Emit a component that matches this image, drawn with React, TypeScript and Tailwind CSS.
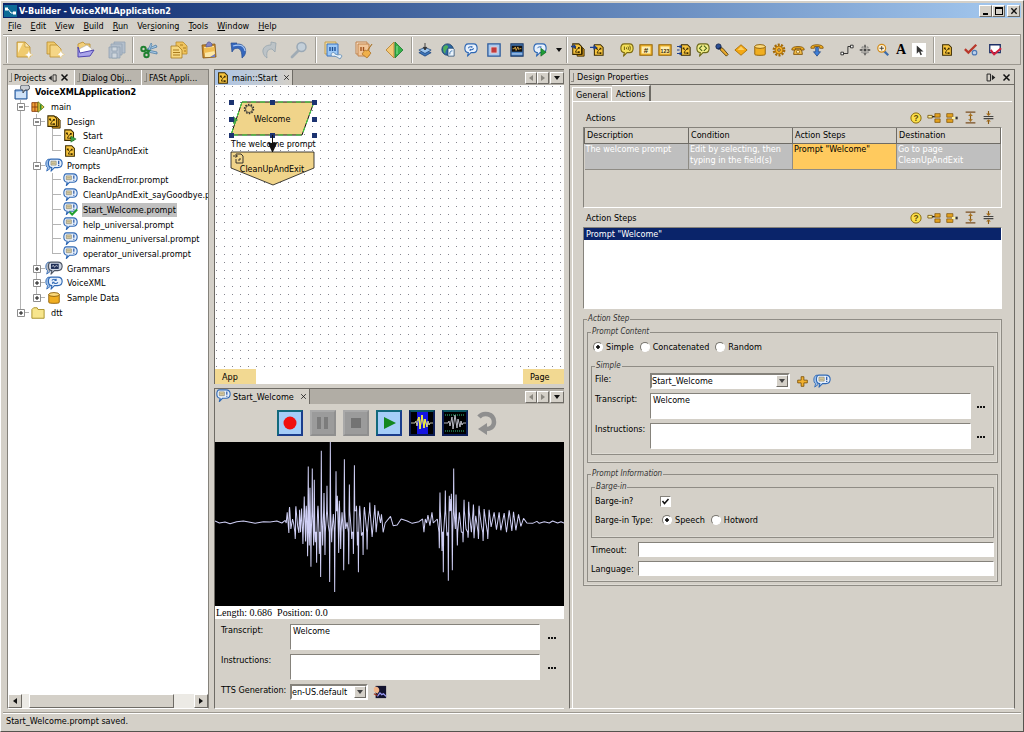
import { ReactNode } from "react";
import clsx from "clsx";

const RAISED =
    "border border-t-white border-l-white border-b-[#6e6b65] border-r-[#6e6b65] bg-[#d4d0c8]";
const SUNKEN =
    "border border-t-[#85827b] border-l-[#85827b] border-b-white border-r-white";

/* ---------- icons ---------- */

function Svg(props: { size?: number; box?: number; children: ReactNode }) {
    const size = props.size ?? 14;
    const box = props.box ?? 16;
    return (
        <svg
            width={size}
            height={size}
            viewBox={`0 0 ${box} ${box}`}
            className="flex-none"
            aria-hidden="true"
        >
            {props.children}
        </svg>
    );
}

function Sheet(props: { x: number; y: number; fill?: string; edge?: string }) {
    return (
        <path
            d={`M${props.x} ${props.y}h7l4 4v8h-11z`}
            fill={props.fill ?? "#f0cb6e"}
            stroke={props.edge ?? "#b98d2e"}
            strokeWidth="0.8"
        />
    );
}

const NewIcon = (
    <Svg size={20} box={20}>
        <path d="M3 2h8l5 5v10H3z" fill="#f0cb6e" stroke="#b98d2e" strokeWidth="0.8" />
        <path d="M4 3h5l-5 10z" fill="#fff0c4" />
        <path d="M11 2v5h5z" fill="#fbe7b0" stroke="#b98d2e" strokeWidth="0.6" />
        <path
            d="M15 10l1 3.500 3 1.500-3 1-1 3.500-1.500-3.500-3-1 3-1.500z"
            fill="#fff"
            stroke="#e8c468"
            strokeWidth="0.5"
        />
    </Svg>
);

const NewManyIcon = (
    <Svg size={20} box={20}>
        <Sheet x={2} y={2} />
        <Sheet x={5} y={5} fill="#f5d686" />
        <path
            d="M16 10l1 3 2.500 1.500-2.500 1-1 3-1.500-3-2.500-1 2.500-1.500z"
            fill="#fff"
            stroke="#e8c468"
            strokeWidth="0.5"
        />
    </Svg>
);

const OpenIcon = (
    <Svg size={20} box={20}>
        <path d="M2 4l5-2 2 2h5v5H2z" fill="#f2cf7a" stroke="#b98d2e" strokeWidth="0.8" />
        <path d="M3 9l8-4 5 4-2 5H3z" fill="#fff" stroke="#999" strokeWidth="0.5" />
        <path
            d="M2 17V7l2 6 14-3-4 6z"
            fill="#aaa5ea"
            stroke="#4f45b0"
            strokeWidth="1"
            strokeLinejoin="round"
        />
    </Svg>
);

const SaveAllIcon = (
    <Svg size={20} box={20}>
        <g fill="#b4bfcc" stroke="#93a2b3" strokeWidth="0.8">
            <path d="M7 2h11v11H7z" />
            <path d="M4 4h11v11H4z" />
            <path d="M2 7h11v11H2z" />
            <path d="M5 7h5v4H5zM5 13h5v5H5z" fill="#cfd6dd" />
        </g>
    </Svg>
);

const CutIcon = (
    <Svg size={20} box={20}>
        <path d="M9 10l9-3-1-2-9 4zM9 12l9 2v-2l-9-2z" fill="#a9cbe6" stroke="#41739f" strokeWidth="0.7" />
        <path d="M9 10l3-7 1 1-2 6z" fill="#a9cbe6" stroke="#41739f" strokeWidth="0.6" />
        <circle cx="4.500" cy="9" r="2.200" fill="none" stroke="#1f8030" strokeWidth="2" />
        <circle cx="7.500" cy="15" r="2.200" fill="none" stroke="#1f8030" strokeWidth="2" />
        <path d="M6 10l4 1-2 2" fill="none" stroke="#1f8030" strokeWidth="2" />
    </Svg>
);

const CopyIcon = (
    <Svg size={20} box={20}>
        <Sheet x={7} y={2} fill="#f0c45e" />
        <Sheet x={2} y={6} fill="#f7d880" edge="#a87b1e" />
        <path d="M4 10h6M4 12.500h7M4 15h7M11 5h3M14 8h3M15 11h2" stroke="#a87b1e" />
    </Svg>
);

const PasteIcon = (
    <Svg size={20} box={20}>
        <path d="M3 5l13-1 1 13-13 1z" fill="#c98b2c" stroke="#845513" strokeWidth="0.8" />
        <path d="M5 7l10-1 1 8-4 3H6z" fill="#fbe7a8" />
        <path d="M5 8l10-1 1 4-11 2z" fill="#f0bd52" />
        <path d="M7 5l2-3h2l2 2v2l-6 1z" fill="#8485c2" stroke="#4d528f" strokeWidth="0.6" />
        <path d="M11 17l5-3v3z" fill="#7480c4" />
    </Svg>
);

const UndoIcon = (
    <Svg size={20} box={20}>
        <path
            d="M2 3l1 9 2-3c5-2 8 0 8 9 6-4 5-15-6-14l1-1z"
            fill="#3567bd"
            stroke="#234a90"
            strokeWidth="0.7"
            strokeLinejoin="round"
        />
        <path d="M4 6c6-2 11-1 12 5" fill="none" stroke="#a9c8f3" strokeWidth="1.200" />
    </Svg>
);

const RedoIcon = (
    <Svg size={20} box={20}>
        <path
            d="M17 3l-1 9-3-3c-4 0-6 2-5 9C2 14 2 5 12 5V2z"
            fill="#bcc3c7"
            stroke="#97a4ad"
            strokeWidth="0.8"
            strokeLinejoin="round"
        />
    </Svg>
);

const SearchIcon = (
    <Svg size={20} box={20}>
        <circle cx="12.500" cy="7" r="4.500" fill="#c3cfd9" stroke="#9aa8b5" strokeWidth="1.500" />
        <path d="M9 11l-6 6" stroke="#a0abb4" strokeWidth="2.800" strokeLinecap="round" />
    </Svg>
);

const BuildIcon = (
    <Svg size={20} box={20}>
        <path d="M2 2h11v12H2z" fill="#f0dca8" stroke="#c6a04d" />
        <path d="M4 4h11v12H4z" fill="#9cc8f6" stroke="#3b73bd" />
        <path d="M7 7v4M9.500 7v4M12 7v4" stroke="#1d4f94" strokeWidth="1.400" />
        <path
            d="M8 14c1-2 4-2 4 0l3 1c1-1 4 0 4 1l-2 3-3-2-3-1c-1 1-3 0-3-2z"
            fill="#e9f1f8"
            stroke="#5c88b0"
            strokeWidth="0.8"
        />
    </Svg>
);

const RebuildIcon = (
    <Svg size={20} box={20}>
        <path d="M2 2h11v12H2z" fill="#f6ddc2" stroke="#c1834c" />
        <path d="M4 4h11v12H4z" fill="#f1c69a" stroke="#c1834c" />
        <path d="M7 7v4M9.500 7v4" stroke="#a1501d" strokeWidth="1.400" />
        <path d="M18 4l-4 6 3 3-4 5-5-4 3-4 2 1z" fill="#f0b04a" stroke="#a66c1d" strokeWidth="0.7" />
    </Svg>
);

const DeployIcon = (
    <Svg size={20} box={20}>
        <path d="M9 2v16L1 10z" fill="#f3c878" stroke="#b37c27" strokeWidth="0.8" />
        <path d="M10 2l8 8-8 8z" fill="#35b14a" stroke="#1b7a2c" strokeWidth="0.8" />
        <path d="M12 6v8" stroke="#8ee29a" />
    </Svg>
);

const InstallIcon = (
    <Svg>
        <path d="M1 11l7-3 7 3-7 4z" fill="#3d74b8" stroke="#153e77" strokeWidth="0.8" />
        <path d="M1 8l7-3 7 3-7 4z" fill="#9cc4ec" stroke="#153e77" strokeWidth="0.8" />
        <path d="M8 0v5M6 5l2 3 2-3z" stroke="#333" fill="#333" />
    </Svg>
);

const GlobeIcon = (
    <Svg>
        <circle cx="7.500" cy="7.500" r="6.500" fill="#2f69a6" stroke="#143b63" />
        <path d="M3 4c3-3 6-1 5 1S5 8 5 11 1 8 3 4z" fill="#4fae5c" />
        <path d="M8 6h6l1 1v8H8z" fill="#eaf3fb" stroke="#143b63" strokeWidth="0.8" />
        <path d="M10 13c0-3 1-4 3-4" fill="none" stroke="#2f69a6" />
    </Svg>
);

function Bubble(props: {
    fill?: string;
    edge?: string;
    wide?: boolean;
    children?: ReactNode;
}) {
    return (
        <g>
            <path
                d={
                    props.wide
                        ? "M4 1h8c4 0 5 2 5 5s-1 5-5 5H8l-4 4 1-4C2 11 1 9 1 6s1-5 3-5z"
                        : "M5 1h6c3 0 4 2 4 5s-1 5-4 5H8l-4 4 1-4C2 11 1 9 1 6s1-5 4-5z"
                }
                fill={props.fill ?? "#e8f1fc"}
                stroke={props.edge ?? "#2f68b4"}
                strokeWidth="1.300"
                strokeLinejoin="round"
            />
            {props.children}
        </g>
    );
}

function PromptGlyph() {
    return (
        <>
            <path d="M4 3.500h6V8H4z" fill="#e8d9a8" stroke="#85826e" strokeWidth="0.8" />
            <path d="M5 5.800h4" stroke="#85826e" strokeWidth="0.8" />
            <path d="M13 3v4M13 8v1.200" stroke="#1e4fa3" strokeWidth="1.400" />
        </>
    );
}

const PromptIcon = (
    <Svg size={15} box={18}>
        <Bubble wide>
            <PromptGlyph />
        </Bubble>
    </Svg>
);

const PromptCheckedIcon = (
    <Svg size={15} box={18}>
        <Bubble wide>
            <PromptGlyph />
        </Bubble>
        <path d="M8 12l3 3 6-6" fill="none" stroke="#22a12f" strokeWidth="2.400" />
    </Svg>
);

function StackedBubble(props: { fill?: string; children: ReactNode }) {
    return (
        <svg width="18" height="15" viewBox="0 0 21 17" aria-hidden="true">
            <path
                d="M5 1C0 1 0 10 3 11l-1 4 4-3z"
                fill={props.fill ?? "#9dbfe8"}
                stroke="#2f68b4"
            />
            <g transform="translate(3 0)">{props.children}</g>
        </svg>
    );
}

const PromptsIcon = (
    <StackedBubble>
        <Bubble wide>
            <PromptGlyph />
        </Bubble>
    </StackedBubble>
);

const GrammarsIcon = (
    <StackedBubble fill="#b7bcc4">
        <Bubble wide fill="#ccd4e2" edge="#4d5563">
            <path d="M4 3h9v6H4z" fill="#1d2c55" />
            <path d="M5 6l2-1 1 2 2-2 2 1" fill="none" stroke="#fff" strokeWidth="0.8" />
        </Bubble>
    </StackedBubble>
);

const VxmlIcon = (
    <StackedBubble>
        <Bubble wide>
            <path
                d="M5 5c1-2 4-2 5 0M12 7c-1 2-4 2-5 0M10 3v2H8M6 9V7h2"
                fill="none"
                stroke="#2f68b4"
                strokeWidth="1.200"
            />
        </Bubble>
    </StackedBubble>
);

const ChatIcon = (
    <Svg>
        <Bubble>
            <path
                d="M5 6c1-2 3-2 4-1M11 6c-1 2-3 2-4 1M9 3.500v2M7 9V7"
                fill="none"
                stroke="#2f68b4"
                strokeWidth="1.200"
            />
        </Bubble>
    </Svg>
);

const ChatRunIcon = (
    <Svg>
        <Bubble>
            <path d="M5 6c1-2 3-2 4-1M9 3.500v2" fill="none" stroke="#2f68b4" />
        </Bubble>
        <path d="M9 6l6 4.500-6 4.500z" fill="#1f9c36" stroke="#0d5c1b" strokeWidth="0.7" />
    </Svg>
);

const BoxIcon = (
    <Svg>
        <path d="M1 1h14v14H1z" fill="#a9c9ee" stroke="#2f5c9c" strokeWidth="1.500" />
        <path d="M4.500 4.500h7v7h-7z" fill="#c23a3a" stroke="#e9d5dc" />
    </Svg>
);

const WaveBoxIcon = (
    <Svg>
        <path d="M1 1h14v14H1z" fill="#4d86c9" stroke="#1d3a66" strokeWidth="1.200" />
        <path d="M2 3h12v7H2z" fill="#111" />
        <path d="M3 6.500h2l1-2 1 4 2-4 1 3 1-1h2" fill="none" stroke="#e3b04b" />
        <path d="M2 12.500h12" stroke="#d5e5f7" />
    </Svg>
);

function MiniPage(props: { x?: number; y?: number }) {
    const x = props.x ?? 3;
    const y = props.y ?? 2;
    return (
        <g transform={`translate(${x} ${y})`}>
            <path d="M0 0h7l3 3v9H0z" fill="#f7c53f" stroke="#3a2a00" strokeWidth="1.200" />
            <path d="M2 4l2 2M7 4.500L4.500 6.500 3 9.500h3" fill="none" stroke="#3a2a00" />
            <path d="M1.500 3h2v2h-2zM6 3.500h2v2H6zM6 8.500h2v2H6z" fill="#3a2a00" />
        </g>
    );
}

const PageIcon = (
    <Svg>
        <MiniPage />
    </Svg>
);

const StartPageIcon = (
    <Svg>
        <MiniPage x={2} y={1} />
        <path d="M9 8l6 3.500L9 15z" fill="#3fa447" stroke="#1d6b26" strokeWidth="0.6" />
    </Svg>
);

const StackIcon = (
    <Svg>
        <path d="M6 4h7l2 2v9H6z" fill="#d79a20" stroke="#3a2a00" />
        <path d="M4 2h7l2 2v9H4z" fill="#e3a92b" stroke="#3a2a00" />
        <MiniPage x={1} y={1} />
    </Svg>
);

const StackInIcon = (
    <Svg>
        <path d="M7 5h6l2 2v8H7z" fill="#d79a20" stroke="#3a2a00" />
        <path d="M5 3h6l2 2v8H5z" fill="#e3a92b" stroke="#3a2a00" />
        <MiniPage x={2} y={1} />
        <path d="M0 4h4M3 2l2 2-2 2" fill="none" stroke="#1c3f8f" strokeWidth="1.500" />
    </Svg>
);

const PageInIcon = (
    <Svg>
        <MiniPage x={5} y={2} />
        <path d="M0 5h6M4 3l3 2-3 2" fill="none" stroke="#1c3f8f" strokeWidth="1.500" />
    </Svg>
);

const SayIcon = (
    <Svg>
        <Bubble fill="#f4e05a" edge="#7d6a12">
            <path d="M5 4v4M7.500 5v2M9 4c1 1 1 3 0 4M11 3c1 2 1 4 0 6" fill="none" stroke="#5c4d08" />
        </Bubble>
    </Svg>
);

function Tile(props: { text: string; size: number }) {
    return (
        <Svg>
            <path d="M1 2h14v12H1z" fill="#f3b72f" stroke="#946407" strokeWidth="1.200" />
            <path d="M3 4h10v8H3z" fill="#fdeeb4" />
            <text
                x="8"
                y="11"
                textAnchor="middle"
                fontSize={props.size}
                fontWeight="bold"
                fontFamily="Liberation Sans, sans-serif"
                fill="#3a2a00"
            >
                {props.text}
            </text>
        </Svg>
    );
}

const BranchIcon = (
    <Svg>
        <MiniPage x={5} y={2} />
        <path d="M0 4h4M0 8h3M0 12h4M3 3l2 1-2 1.500M3 11l2 1-2 1.500" fill="none" stroke="#1c3f8f" strokeWidth="1.300" />
    </Svg>
);

const CodeIcon = (
    <Svg>
        <Bubble fill="#f0ec88" edge="#6d6a1a">
            <path d="M7 3L4 6l3 3M9 3l3 3-3 3" fill="none" stroke="#3f5f16" strokeWidth="1.200" />
        </Bubble>
    </Svg>
);

const MicIcon = (
    <Svg>
        <circle cx="4" cy="4" r="3" fill="#2c4f96" stroke="#14264d" />
        <path d="M6 5l3 1 6 7-2 2-7-7z" fill="#e9a92d" stroke="#3a2a00" strokeWidth="0.9" />
        <path d="M4 7l3-2" stroke="#14264d" strokeWidth="1.500" />
    </Svg>
);

const DiamondIcon = (
    <Svg>
        <path d="M8 2l7 6-7 6-7-6z" fill="#f5a914" stroke="#a96f05" />
        <path d="M8 4l4 4H4z" fill="#fbcf63" />
    </Svg>
);

const DbIcon = (
    <Svg>
        <path d="M2 4v9c0 1.500 12 1.500 12 0V4z" fill="#f0ae21" stroke="#8a5b05" />
        <ellipse cx="8" cy="4" rx="6" ry="2.200" fill="#fddb7c" stroke="#8a5b05" />
    </Svg>
);

const GearIcon = (
    <Svg>
        <circle cx="8" cy="8" r="5.800" fill="none" stroke="#a46a08" strokeWidth="3" strokeDasharray="2.300 1.300" />
        <circle cx="8" cy="8" r="4.500" fill="#f5b12a" stroke="#a46a08" />
        <circle cx="8" cy="8" r="1.500" fill="#d4d0c8" stroke="#7a4e04" />
    </Svg>
);

function Handset(props: { y: number }) {
    return (
        <path
            transform={`translate(0 ${props.y})`}
            d="M1 5c0-4 14-4 14 0v1h-4V4H5v2H1z"
            fill="#f0ae21"
            stroke="#7a4e04"
            strokeWidth="0.9"
        />
    );
}

const PhoneIcon = (
    <Svg>
        <path d="M3 13l1-6h8l1 6z" fill="#f5c04a" stroke="#7a4e04" />
        <circle cx="8" cy="10" r="1.800" fill="#fff2c4" stroke="#7a4e04" strokeWidth="0.8" />
        <Handset y={2} />
    </Svg>
);

const TransferIcon = (
    <Svg>
        <Handset y={0} />
        <path d="M6.500 5h3v5h2.500l-4 5-4-5h2.500z" fill="#3f7fd6" stroke="#1a3f80" strokeWidth="0.8" />
    </Svg>
);

const LinkIcon = (
    <Svg>
        <path d="M3 12h6V4h4" fill="none" stroke="#222" />
        <path d="M1 10.500h3v3H1zM12 2.500h3v3h-3z" fill="#fff" stroke="#222" />
    </Svg>
);

const CenterIcon = (
    <Svg>
        <path d="M4.500 4.500h7v7h-7z" fill="#c4c1ba" stroke="#777" strokeDasharray="2 1" />
        <path d="M8 2v3M8 11v3M2 8h3M11 8h3" stroke="#444" strokeWidth="1.500" />
        <path d="M6.500 6.500h3v3h-3z" fill="#444" />
    </Svg>
);

const ZoomIcon = (
    <Svg>
        <path d="M9 9l5 5" stroke="#3c6cab" strokeWidth="2.500" />
        <circle cx="6.500" cy="6" r="4.500" fill="#fff3d6" stroke="#d08a1a" strokeWidth="1.400" />
        <path d="M4 6h5M6.500 3.500v5" stroke="#333" />
    </Svg>
);

const LetterIcon = (
    <span className="font-['Liberation_Serif',serif] text-[14px] leading-none font-bold">A</span>
);

const PointerIcon = (
    <span className="flex size-[14px] items-center justify-center bg-white">
        <Svg size={12}>
            <path d="M5 2v11l3-3 2 5 2-1-2-4h4z" fill="#333" />
        </Svg>
    </span>
);

const VerifyIcon = (
    <Svg>
        <path d="M1 7l4 4 9-9" fill="none" stroke="#b8382b" strokeWidth="2.600" />
        <circle cx="12" cy="11" r="2.600" fill="#bcd0ea" stroke="#4e79b4" strokeWidth="1.300" />
    </Svg>
);

const MarkIcon = (
    <Svg>
        <path d="M2 2h12v9H2z" fill="#fff" stroke="#1c2f66" strokeWidth="1.500" />
        <path d="M3 8l4 5 8-7" fill="none" stroke="#d0213c" strokeWidth="2.300" />
    </Svg>
);

const HelpIcon = (
    <Svg size={12}>
        <circle cx="8" cy="8" r="6.800" fill="#fbe04a" stroke="#8c6c08" strokeWidth="1.300" />
        <text
            x="8"
            y="12"
            textAnchor="middle"
            fontSize="11"
            fontWeight="bold"
            fontFamily="Liberation Sans, sans-serif"
            fill="#5c4705"
        >
            ?
        </text>
    </Svg>
);

const InsertBeforeIcon = (
    <Svg size={14}>
        <path d="M1 5h5v3H1z" fill="#fff3a0" stroke="#7a5a10" />
        <path d="M6 6.500h3" stroke="#222" strokeWidth="1.500" />
        <path d="M9 3h6v4H9zM9 9h6v4H9z" fill="#e3a21f" stroke="#7a4e04" strokeWidth="0.8" />
    </Svg>
);

const InsertAfterIcon = (
    <Svg size={14}>
        <path d="M2 3h7v4H2zM2 9h7v4H2z" fill="#e3a21f" stroke="#7a4e04" strokeWidth="0.8" />
        <path d="M8 8h4" stroke="#fff3a0" strokeWidth="2.500" />
        <path d="M12 6.500h2.500v3H12z" fill="#333" />
    </Svg>
);

const ExpandIcon = (
    <Svg size={13}>
        <path d="M2 1.500h12M2 14.500h12" stroke="#7a4e20" strokeWidth="1.600" />
        <path d="M8 3v10" stroke="#8a5a14" strokeWidth="1.400" />
        <path d="M5 6l3-3 3 3zM5 10l3 3 3-3z" fill="#a8701c" />
    </Svg>
);

const CollapseIcon = (
    <Svg size={13}>
        <path d="M2 6.800h12M2 9.400h12" stroke="#444" strokeWidth="1.400" />
        <path d="M5 3l3 3 3-3zM5 13l3-3 3 3z" fill="#a8701c" />
        <path d="M8 0v4M8 12v4" stroke="#8a5a14" strokeWidth="1.400" />
    </Svg>
);

const ProjectIcon = (
    <Svg size={16}>
        <path d="M1 6h12v9H1z" fill="#8fb9ea" stroke="#23508f" />
        <path d="M2 8l10-1v7H2z" fill="#cfe2f8" />
        <path d="M8 1h6c2 0 2 5 0 5h-3L9 9V6H8C6 6 6 1 8 1z" fill="#c9ced4" stroke="#444c58" />
    </Svg>
);

const ModuleIcon = (
    <Svg>
        <path d="M1 3h7v10H1z" fill="#f0a13a" stroke="#8a3c0c" />
        <path d="M1 8h7M4.500 3v10" stroke="#8a3c0c" />
        <path d="M8 2l7 6-7 6z" fill="#f3c93f" stroke="#5b7a1c" />
        <path d="M11 5v6" stroke="#2c8a2c" strokeWidth="2" />
    </Svg>
);

const FolderIcon = (
    <Svg>
        <path d="M1 4l2-2h4l1 2h7v10H1z" fill="#f7e58c" stroke="#a48a1e" />
    </Svg>
);

const PlusIcon = (
    <Svg size={11}>
        <path d="M6 1h4v5h5v4h-5v5H6v-5H1V6h5z" fill="#f2b130" stroke="#7a4e04" strokeWidth="1.200" />
    </Svg>
);

const PinIcon = (
    <Svg size={10}>
        <path d="M8 3h5v10H8z" fill="none" stroke="#222" strokeWidth="1.400" />
        <path d="M6 4v8L1 8z" fill="#222" />
    </Svg>
);

const PinRightIcon = (
    <Svg size={11}>
        <path d="M3 3h5v10H3z" fill="none" stroke="#222" strokeWidth="1.400" />
        <path d="M10 4v8l5-4z" fill="#222" />
    </Svg>
);

function CloseIcon(props: { size?: number; weight?: number }) {
    return (
        <Svg size={props.size ?? 9} box={9}>
            <path d="M1.500 1.500l6 6M7.500 1.500l-6 6" stroke="#111" strokeWidth={props.weight ?? 1.5} />
        </Svg>
    );
}

function Caret(props: { dir: "left" | "right" | "down"; color?: string }) {
    const paths = { left: "M6 1v6L2 4z", right: "M2 1v6l4-3z", down: "M1 2h6L4 6z" };
    return (
        <Svg size={8} box={8}>
            <path d={paths[props.dir]} fill={props.color ?? "#111"} />
        </Svg>
    );
}

/* ---------- window chrome ---------- */

function TitleBar() {
    return (
        <header className="flex h-[15px] items-center bg-linear-to-r from-[#0a246a] to-[#a6caf0] px-px">
            <svg width="13" height="12" viewBox="0 0 13 12" aria-hidden="true">
                <path d="M0 0h13v12H0z" fill="#0d6b96" />
                <path d="M1 4h3l3 4h4" fill="none" stroke="#fff" />
                <path d="M1 2.500h3v3H1zM9 6.500h3v3H9z" fill="#fff" />
            </svg>
            <h1 className="flex-1 pl-[2px] font-bold text-white">
                V-Builder - VoiceXMLApplication2
            </h1>
            <div className="flex">
                <button aria-label="Minimize" className={clsx(RAISED, "flex h-3 w-[13px] items-end justify-center pb-px")}>
                    <span className="h-[2px] w-[5px] bg-black" />
                </button>
                <button aria-label="Maximize" className={clsx(RAISED, "flex h-3 w-[13px] items-center justify-center")}>
                    <span className="h-2 w-2 border border-t-2 border-black" />
                </button>
                <button aria-label="Close" className={clsx(RAISED, "ml-[2px] flex h-3 w-[13px] items-center justify-center")}>
                    <CloseIcon size={8} />
                </button>
            </div>
        </header>
    );
}

const menus = [
    ["", "F", "ile"],
    ["", "E", "dit"],
    ["", "V", "iew"],
    ["", "B", "uild"],
    ["", "R", "un"],
    ["Ver", "s", "ioning"],
    ["", "T", "ools"],
    ["", "W", "indow"],
    ["", "H", "elp"],
];

function MenuBar() {
    return (
        <nav className="flex h-4 items-center gap-[9px] pl-[5px]">
            {menus.map(([pre, key, post]) => (
                <button key={key}>
                    {pre}
                    <span className="underline">{key}</span>
                    {post}
                </button>
            ))}
        </nav>
    );
}

type Tool = [string, ReactNode];

const fileTools: Tool[] = [
    ["New", NewIcon],
    ["New from template", NewManyIcon],
    ["Open", OpenIcon],
    ["Save all", SaveAllIcon],
];
const editTools: Tool[] = [
    ["Cut", CutIcon],
    ["Copy", CopyIcon],
    ["Paste", PasteIcon],
    ["Undo", UndoIcon],
    ["Redo", RedoIcon],
    ["Find", SearchIcon],
];
const buildTools: Tool[] = [
    ["Build", BuildIcon],
    ["Rebuild", RebuildIcon],
    ["Deploy", DeployIcon],
];
const runTools: Tool[] = [
    ["Install", InstallIcon],
    ["Web", GlobeIcon],
    ["Dialog", ChatIcon],
    ["Stop", BoxIcon],
    ["Audio", WaveBoxIcon],
    ["Run dialog", ChatRunIcon],
];
const pageTools: Tool[] = [
    ["Module", StackInIcon],
    ["Page", PageInIcon],
];
const nodeTools: Tool[] = [
    ["Prompt", SayIcon],
    ["Number", <Tile text="#" size={9} />],
    ["Digits", <Tile text="123" size={6} />],
    ["Branch", BranchIcon],
    ["Code", CodeIcon],
    ["Record", MicIcon],
    ["Decision", DiamondIcon],
    ["Database", DbIcon],
    ["Process", GearIcon],
    ["Call", PhoneIcon],
    ["Transfer", TransferIcon],
];
const drawTools: Tool[] = [
    ["Connect", LinkIcon],
    ["Center", CenterIcon],
    ["Zoom", ZoomIcon],
    ["Text", LetterIcon],
    ["Select", PointerIcon],
];
const checkTools: Tool[] = [
    ["Page properties", PageIcon],
    ["Validate", VerifyIcon],
    ["Mark", MarkIcon],
];

function ToolGroup(props: { tools: Tool[]; width: string; className?: string }) {
    return (
        <div className={clsx("flex flex-none items-center", props.className)}>
            {props.tools.map(([name, icon]) => (
                <button
                    key={name}
                    aria-label={name}
                    className={clsx("flex flex-none items-center justify-center", props.width)}
                >
                    {icon}
                </button>
            ))}
        </div>
    );
}

function Separator() {
    return <span className="h-[26px] w-[2px] flex-none border-l border-[#a09d95] bg-white" />;
}

function Toolbar() {
    return (
        <div className="flex h-[31px] items-center overflow-hidden border-y border-t-[#9b978f] border-b-[#9b978f] border-r border-r-[#9b978f] pl-[3px] shadow-[inset_0_1px_0_white]">
            <Separator />
            <ToolGroup tools={fileTools} width="w-[31px]" />
            <Separator />
            <ToolGroup tools={editTools} width="w-[30px]" />
            <span className="w-px flex-none" />
            <Separator />
            <ToolGroup tools={buildTools} width="w-[31px]" />
            <span className="w-px flex-none" />
            <Separator />
            <ToolGroup tools={runTools} width="w-[23px]" />
            <button aria-label="Run options" className="w-[15px] flex-none pl-1">
                <Caret dir="down" />
            </button>
            <Separator />
            <ToolGroup tools={pageTools} width="w-[19px]" />
            <ToolGroup tools={nodeTools} width="w-[19px]" className="ml-[11px]" />
            <ToolGroup tools={drawTools} width="w-[18px]" className="ml-[12px]" />
            <span className="w-[5px] flex-none" />
            <Separator />
            <ToolGroup tools={checkTools} width="w-6" />
        </div>
    );
}

function Grip() {
    return <span className="h-[9px] w-[3px] flex-none border-r border-b border-[#8b8881]" />;
}

/* ---------- project tree ---------- */

type Row = {
    label: string;
    icon: ReactNode;
    // one character per level: | passes, T branches, L ends
    guides: string;
    open?: boolean;
    selected?: boolean;
};

const rows: Row[] = [
    { label: "main", icon: ModuleIcon, guides: "T", open: true },
    { label: "Design", icon: StackIcon, guides: "|T", open: true },
    { label: "Start", icon: StartPageIcon, guides: "||T" },
    { label: "CleanUpAndExit", icon: PageIcon, guides: "||L" },
    { label: "Prompts", icon: PromptsIcon, guides: "|T", open: true },
    { label: "BackendError.prompt", icon: PromptIcon, guides: "||T" },
    { label: "CleanUpAndExit_sayGoodbye.prompt", icon: PromptIcon, guides: "||T" },
    { label: "Start_Welcome.prompt", icon: PromptCheckedIcon, guides: "||T", selected: true },
    { label: "help_universal.prompt", icon: PromptIcon, guides: "||T" },
    { label: "mainmenu_universal.prompt", icon: PromptIcon, guides: "||T" },
    { label: "operator_universal.prompt", icon: PromptIcon, guides: "||L" },
    { label: "Grammars", icon: GrammarsIcon, guides: "|T", open: false },
    { label: "VoiceXML", icon: VxmlIcon, guides: "|T", open: false },
    { label: "Sample Data", icon: DbIcon, guides: "|L", open: false },
    { label: "dtt", icon: FolderIcon, guides: "L", open: false },
];

function Guide(props: { kind: string; open?: boolean }) {
    return (
        <span className="relative grid w-4 flex-none grid-cols-2 grid-rows-2 self-stretch border-[#b4b4b4]">
            <span className="border-r border-inherit" />
            <span className={clsx("border-inherit", props.kind !== "|" && "border-b")} />
            <span className={clsx("border-inherit", props.kind !== "L" && "border-r")} />
            {props.open !== undefined && (
                <span className="absolute inset-0 flex items-center justify-center">
                    <svg width="8" height="8" viewBox="0 0 8 8" aria-hidden="true">
                        <path d="M.5 .5h7v7h-7z" fill="#fff" stroke="#8d8d8d" />
                        <path d={props.open ? "M2 4h4" : "M2 4h4M4 2v4"} stroke="#111" />
                    </svg>
                </span>
            )}
        </span>
    );
}

function Tree() {
    return (
        <ul className="grid h-[235px] flex-none auto-rows-fr pl-[5px] whitespace-nowrap">
            <li className="flex items-center">
                <span className="flex w-[18px] flex-none justify-center">{ProjectIcon}</span>
                <span className="pl-1 font-bold">VoiceXMLApplication2</span>
            </li>
            {rows.map((row) => (
                <li key={row.label} className="flex items-center">
                    {row.guides.split("").map((kind, i) => (
                        <Guide
                            key={i}
                            kind={kind}
                            open={i === row.guides.length - 1 ? row.open : undefined}
                        />
                    ))}
                    <span className="flex w-[18px] flex-none justify-center">{row.icon}</span>
                    <span
                        className={clsx(
                            "ml-[3px] px-px leading-[14px]",
                            row.selected && "bg-[#c0c0c0]",
                        )}
                    >
                        {row.label}
                    </span>
                </li>
            ))}
        </ul>
    );
}

function ProjectPanel() {
    return (
        <section className="flex w-[202px] flex-none flex-col border border-[#85827b] border-b-white">
            <div className="flex h-[15px] flex-none bg-[#b9b5ad]">
                <button className="flex flex-1 items-center gap-[2px] bg-[#d4d0c8] pl-px">
                    <Grip />
                    Projects
                    {PinIcon}
                    <CloseIcon />
                </button>
                <button className="flex w-[67px] items-center gap-[2px] border-l border-white pl-[2px]">
                    <Grip />
                    Dialog Obj...
                </button>
                <button className="flex w-[67px] items-center gap-[2px] border-l border-white pl-[2px]">
                    <Grip />
                    FASt Appli...
                </button>
            </div>
            <div className="flex flex-1 flex-col overflow-hidden bg-white">
                <Tree />
            </div>
            <div className="flex h-[14px] flex-none bg-[#eceae5]">
                <button aria-label="Scroll left" className={clsx(RAISED, "flex w-[14px] items-center justify-center")}>
                    <Caret dir="left" />
                </button>
                <div className="flex flex-1 pl-[7px]">
                    <span className={clsx(RAISED, "w-[145px]")} />
                </div>
                <button aria-label="Scroll right" className={clsx(RAISED, "flex w-[14px] items-center justify-center")}>
                    <Caret dir="right" />
                </button>
            </div>
        </section>
    );
}

/* ---------- editors ---------- */

function EditorTabs(props: { icon: ReactNode; title: string; active?: boolean }) {
    return (
        <div className="flex h-[15px] flex-none items-center bg-[#b1ada5]">
            <button
                className={clsx(
                    "flex h-full items-center border-r border-[#6e6b65] pr-[2px] pl-px",
                    props.active ? "bg-linear-to-r from-[#a9c3e6] to-[#d4d0c8]" : "bg-[#d4d0c8]",
                )}
            >
                {props.icon}
                <span className="pr-[6px] pl-[2px]">{props.title}</span>
                <CloseIcon size={7} weight={1} />
            </button>
            <div className="ml-auto flex">
                <button aria-label="Previous tab" className={clsx(RAISED, "flex h-3 w-3 items-center justify-center")}>
                    <Caret dir="left" color="#8b8881" />
                </button>
                <button aria-label="Next tab" className={clsx(RAISED, "flex h-3 w-3 items-center justify-center")}>
                    <Caret dir="right" color="#8b8881" />
                </button>
                <button aria-label="Tab list" className={clsx(RAISED, "ml-px flex h-3 w-[14px] items-center justify-center")}>
                    <Caret dir="down" />
                </button>
            </div>
        </div>
    );
}

const handles = [
    [16, 17],
    [57, 17],
    [99, 17],
    [16, 34],
    [99, 34],
    [16, 50],
    [57, 50],
    [99, 50],
];

function Diagram() {
    return (
        <svg className="h-[283px] w-full flex-1" fontFamily="DejaVu Sans, sans-serif" fontSize="8">
            <defs>
                <pattern id="dots" width="8" height="8" patternUnits="userSpaceOnUse">
                    <path d="M1 1h1v1H1z" fill="#85858f" />
                </pattern>
            </defs>
            <rect width="100%" height="100%" fill="url(#dots)" />
            <path d="M27 17h72L87 50H16z" fill="#f0d48a" stroke="#111" />
            <path d="M27 17h72L87 50H16z" fill="none" stroke="#3be03b" strokeDasharray="5 4" />
            <path d="M18 31l5 4-5 4z" fill="#3f9c46" />
            <circle cx="34" cy="24" r="4.500" fill="none" stroke="#333" strokeWidth="1.500" strokeDasharray="1.500 1.300" />
            <circle cx="34" cy="24" r="3.500" fill="none" stroke="#333" strokeWidth="0.800" />
            <text x="57" y="37" textAnchor="middle">
                Welcome
            </text>
            {handles.map(([x, y]) => (
                <rect key={`${x}-${y}`} x={x - 2} y={y - 2} width="5" height="5" fill="#1c3370" />
            ))}
            <text x="16" y="62">
                The welcome prompt
            </text>
            <path d="M57.500 50v10" stroke="#111" />
            <path d="M53 58h9l-4.500 10z" fill="#111" />
            <path d="M16 67h83v16l-41 17-42-17z" fill="#f0d48a" stroke="#111" strokeWidth="0.800" />
            <path
                d="M21 69h5l2 2v7h-7v-4M18 71h4M20.500 69.500l2 1.500-2 1.500M23 75h2v-2"
                fill="none"
                stroke="#222"
                strokeWidth="0.900"
            />
            <text x="57" y="87" textAnchor="middle">
                CleanUpAndExit
            </text>
        </svg>
    );
}

function DesignEditor() {
    return (
        <section className="flex flex-1 flex-col border-l border-t border-[#6e6b65]">
            <EditorTabs icon={PageIcon} title="main::Start" active />
            <div className="flex flex-1 flex-col bg-white">
                <Diagram />
                <div className="flex h-[15px] flex-none justify-between">
                    <button className="w-[41px] bg-[#f2d992] pl-[7px] text-left">App</button>
                    <button className="w-[41px] bg-[#f2d992] pl-[7px] text-left">Page</button>
                </div>
            </div>
        </section>
    );
}

// peaks of the recording, the resting level is 260
const samples =
    "15,256 28,262 45,259 60,264 80,258 100,256 120,260 135,263 160,258 180,259 200,256 215,262 225,254 228,262 231,230 236,292 238,214 242,280 247,250 250,262 255,310 257,212 262,270 266,292 268,222 271,290 274,218 278,325 282,182 286,318 288,210 292,362 294,92 297,330 299,156 302,394 306,98 310,330 312,132 315,320 319,382 323,210 327,355 331,425 333,44 337,330 341,172 344,358 350,150 354,270 358,440 360,18 364,320 369,235 373,470 377,106 381,180 385,352 387,195 391,340 395,230 400,404 402,70 406,280 410,260 415,386 417,146 424,310 429,355 432,88 438,210 441,330 444,410 448,210 453,300 458,358 462,214 470,342 474,250 478,200 485,304 493,208 497,290 503,225 510,262 513,236 518,290 524,262 540,242 548,270 560,268 572,250 590,256 605,263 625,258 636,250 640,290 644,250 648,262 652,238 658,270 664,230 668,262 680,250 686,338 688,170 694,346 698,410 704,164 709,300 713,436 716,180 720,190 722,174 725,404 729,98 734,280 736,176 740,330 746,230 752,290 757,320 760,192 766,280 772,306 774,198 782,290 788,206 790,308 795,240 803,310 805,210 812,270 817,316 820,220 825,260 831,310 835,222 841,274 850,230 857,282 865,230 870,284 880,232 887,290 895,224 903,286 908,228 915,284 923,236 930,272 938,248 948,262 965,263 978,257 985,263 1000,258 1015,262 1025,256 1040,262 1050,258 1059,262";

// tall peaks become narrow spikes, the quiet parts stay a plain line
const wave = samples
    .split(" ")
    .map((pair) => {
        const [x, y] = pair.split(",").map(Number);
        if (Math.abs(y - 260) < 45) return pair;
        const base = y < 260 ? 225 : 290;
        return `${x - 1},${base} ${x},${y} ${x + 1},${base}`;
    })
    .join(" ");

const pulse = "M2 13h4l1-2 1 5 2-9 1 12 2-14 2 13 1-9 2 8 1-6 1 4 1-2h4";

function PlayerButton(props: { name: string; disabled?: boolean; dark?: boolean; children: ReactNode }) {
    return (
        <button
            aria-label={props.name}
            disabled={props.disabled}
            className={clsx(
                "size-[26px] border-2",
                props.disabled && "border-[#8f8f8f] border-t-[#a9a9a9] border-l-[#a9a9a9] bg-[#9b9b9b]",
                props.dark && "border-[#0b1c55] border-t-[#0d5560] bg-black",
                !props.disabled && !props.dark && "border-[#1b3d8c] border-t-[#12697c] border-l-[#12697c] bg-[#a5cdf8]",
            )}
        >
            <svg viewBox="2 2 22 22" className="size-full" aria-hidden="true">
                {props.children}
            </svg>
        </button>
    );
}

function Player() {
    return (
        <div className="flex h-[38px] flex-none items-center justify-center gap-[7px] pr-1">
            <PlayerButton name="Record">
                <circle cx="13" cy="13" r="6.500" fill="#f01010" />
            </PlayerButton>
            <PlayerButton name="Pause" disabled>
                <path d="M7 7h4v12H7zM14 7h4v12h-4z" fill="#7c7c7c" />
            </PlayerButton>
            <PlayerButton name="Stop" disabled>
                <path d="M8 8h10v10H8z" fill="#737373" />
            </PlayerButton>
            <PlayerButton name="Play">
                <path d="M8 7l12 6-12 6z" fill="#12871f" />
            </PlayerButton>
            <PlayerButton name="Selection" dark>
                <path d="M8 2h11v22H8z" fill="#1414e0" />
                <path d={pulse} fill="none" stroke="#d9d9c0" strokeWidth="0.900" />
                <path d="M8 11l2-4 1 12 2-14 2 13 1-9 2 8" fill="none" stroke="#f4ee2a" />
            </PlayerButton>
            <PlayerButton name="Trim" dark>
                <path d={pulse} fill="none" stroke="#c9c9d6" strokeWidth="0.900" />
                <path d="M3 5h20M3 21h20" stroke="#39c78b" strokeDasharray="1 1" />
            </PlayerButton>
            <button aria-label="Revert" disabled className="ml-px">
                <svg width="22" height="26" viewBox="0 0 22 26" aria-hidden="true">
                    <path d="M3 7c4-5 15-4 15 5 0 5-4 7-8 7" fill="none" stroke="#8f8f8f" strokeWidth="4.500" />
                    <path d="M11 13v12l-9-6z" fill="#8f8f8f" />
                </svg>
            </button>
        </div>
    );
}

function TextRow(props: {
    id: string;
    label: string;
    value?: string;
    labelWidth: string;
    moreWidth: string;
}) {
    return (
        <div className="flex">
            <label htmlFor={props.id} className={clsx("flex-none", props.labelWidth)}>
                {props.label}
            </label>
            <textarea
                id={props.id}
                defaultValue={props.value}
                className={clsx(SUNKEN, "h-[26px] flex-1 resize-none bg-white px-[2px]")}
            />
            <button
                aria-label={`Edit ${props.label}`}
                className={clsx("flex items-end justify-center pb-[11px]", props.moreWidth)}
            >
                <svg width="8" height="2" viewBox="0 0 8 2" aria-hidden="true">
                    <path d="M0 0h2v2H0zM3 0h2v2H3zM6 0h2v2H6z" fill="#111" />
                </svg>
            </button>
        </div>
    );
}

function Select(props: { id: string; value: string; width: string }) {
    return (
        <span className={clsx("relative flex h-4", props.width)}>
            <select
                id={props.id}
                className={clsx(SUNKEN, "w-full appearance-none border-2 bg-white")}
            >
                <option>{props.value}</option>
            </select>
            <span
                className={clsx(
                    RAISED,
                    "pointer-events-none absolute top-[2px] right-[2px] flex h-3 w-3 items-center justify-center",
                )}
            >
                <Caret dir="down" color="#444" />
            </span>
        </span>
    );
}

function AudioEditor() {
    return (
        <section className="flex flex-none flex-col border-l border-t border-[#6e6b65] border-b border-b-white">
            <EditorTabs icon={PromptIcon} title="Start_Welcome" />
            <Player />
            <svg
                viewBox="15 18 1044 494"
                preserveAspectRatio="none"
                className="h-[164px] w-full flex-none bg-black"
                role="img"
                aria-label="Recorded audio"
            >
                <polyline points={wave} fill="none" stroke="#cfcff5" strokeWidth="3" strokeLinejoin="bevel" />
            </svg>
            <p className="h-[13px] flex-none bg-white pl-px font-['Liberation_Serif',serif] text-[10px] leading-[13px] whitespace-pre">
                Length: 0.686  Position: 0.0
            </p>
            <div className="flex h-[89px] flex-none flex-col gap-1 pt-[5px] pl-[6px]">
                <TextRow id="audio-transcript" label="Transcript:" value="Welcome" labelWidth="w-[69px]" moreWidth="w-[24px]" />
                <TextRow id="audio-instructions" label="Instructions:" labelWidth="w-[69px]" moreWidth="w-[24px]" />
                <div className="flex">
                    <label htmlFor="tts" className="w-[69px]">
                        TTS Generation:
                    </label>
                    <Select id="tts" value="en-US.default" width="w-[78px]" />
                    <button aria-label="Generate speech" className="ml-[5px]">
                        <Svg size={14}>
                            <path d="M3 1h12v14H3z" fill="#12122e" />
                            <path d="M1 3c4-3 7 1 6 4L5 10 1 7z" fill="#f0b48a" />
                            <path d="M5 13l3-4 2 2 2-1 3 3" fill="none" stroke="#9a9af5" strokeWidth="1.500" />
                            <path d="M1 10l4 2" stroke="#a2341c" strokeWidth="1.500" />
                        </Svg>
                    </button>
                </div>
            </div>
        </section>
    );
}

/* ---------- design properties ---------- */

const listTools: Tool[] = [
    ["Help", HelpIcon],
    ["Insert before", InsertBeforeIcon],
    ["Insert after", InsertAfterIcon],
    ["Expand", ExpandIcon],
    ["Collapse", CollapseIcon],
];

function SectionHead(props: { title: string }) {
    return (
        <div className="flex h-[19px] flex-none items-center pr-[5px] pl-[3px]">
            <h2 className="flex-1">{props.title}</h2>
            <ToolGroup tools={listTools} width="w-[18px]" />
        </div>
    );
}

function ActionsTable() {
    const cell = "border-r border-[#8f8c85] pl-px align-top leading-[11px]";
    return (
        <div className={clsx(SUNKEN, "h-[81px] flex-none")}>
            <table className="w-full table-fixed border-collapse text-left">
                <thead>
                    <tr className="h-[15px]">
                        {["Description", "Condition", "Action Steps", "Destination"].map((name) => (
                            <th
                                key={name}
                                className="border border-t-0 border-[#6e6b65] pl-[2px] font-normal"
                            >
                                {name}
                            </th>
                        ))}
                    </tr>
                </thead>
                <tbody>
                    <tr className="h-[26px] border-b border-[#8f8c85] bg-[#bfbfbf] text-white">
                        <td className={cell}>The welcome prompt</td>
                        <td className={cell}>
                            Edit by selecting, then
                            <br />
                            typing in the field(s)
                        </td>
                        <td className={clsx(cell, "bg-[#ffca5e] text-black")}>Prompt "Welcome"</td>
                        <td className={cell}>
                            Go to page
                            <br />
                            CleanUpAndExit
                        </td>
                    </tr>
                </tbody>
            </table>
        </div>
    );
}

function Group(props: { title: string; className?: string; children: ReactNode }) {
    return (
        <fieldset
            className={clsx(
                "min-w-0 border border-[#8f8c85] px-[3px] shadow-[inset_-1px_-1px_0_#dedbd4]",
                props.className,
            )}
        >
            <legend className="px-px text-[8px] leading-[10px] text-[#333] italic">{props.title}</legend>
            {props.children}
        </fieldset>
    );
}

function Radio(props: { group: string; label: string; checked?: boolean }) {
    return (
        <label className="flex items-center gap-[3px]">
            <input
                type="radio"
                name={props.group}
                defaultChecked={props.checked}
                className="size-[10px] appearance-none rounded-full border border-[#77746d] border-r-white border-b-white bg-white checked:bg-[radial-gradient(circle,#111_1.5px,white_2px)]"
            />
            {props.label}
        </label>
    );
}

function PropertiesPanel() {
    return (
        <section className="flex flex-1 flex-col border border-[#6e6b65] border-b-white">
            <div className="flex h-[15px] flex-none items-center gap-[3px] border-b border-[#6e6b65] pr-[3px] pl-px">
                <Grip />
                <h2 className="flex-1">Design Properties</h2>
                <button aria-label="Pin">{PinRightIcon}</button>
                <button aria-label="Close panel" className="ml-[3px]">
                    <CloseIcon />
                </button>
            </div>
            <div className="flex h-4 flex-none items-end pl-[2px]">
                <button className="h-[14px] border border-b-0 border-white px-[3px]">General</button>
                <button className="h-4 border-t border-r-2 border-t-white border-r-[#6e6b65] px-1">
                    Actions
                </button>
            </div>
            <div className="mx-[2px] flex flex-1 flex-col border-t border-l border-white px-[10px] pt-[6px]">
                <SectionHead title="Actions" />
                <ActionsTable />
                <SectionHead title="Action Steps" />
                <ul className={clsx(SUNKEN, "h-[82px] flex-none bg-white")}>
                    <li className="h-3 bg-[#0a246a] pl-[2px] text-white">Prompt "Welcome"</li>
                </ul>
                <Group title="Action Step" className="mt-[5px] pb-[3px]">
                    <Group title="Prompt Content" className="mt-[3px] pb-[7px]">
                        <div className="flex h-[19px] items-center gap-[6px] pl-[2px]">
                            <Radio group="content" label="Simple" checked />
                            <Radio group="content" label="Concatenated" />
                            <Radio group="content" label="Random" />
                        </div>
                        <Group title="Simple" className="mt-[5px] pb-[5px]">
                            <div className="flex flex-col gap-1 pt-[2px]">
                                <div className="flex">
                                    <label htmlFor="file" className="w-[55px]">
                                        File:
                                    </label>
                                    <Select id="file" value="Start_Welcome" width="w-[140px]" />
                                    <button aria-label="Add prompt" className="ml-[7px]">
                                        {PlusIcon}
                                    </button>
                                    <button aria-label="Open prompt" className="ml-[5px]">
                                        {PromptsIcon}
                                    </button>
                                </div>
                                <TextRow id="transcript" label="Transcript:" value="Welcome" labelWidth="w-[55px]" moreWidth="w-[19px]" />
                                <TextRow id="instructions" label="Instructions:" labelWidth="w-[55px]" moreWidth="w-[19px]" />
                            </div>
                        </Group>
                    </Group>
                    <Group title="Prompt Information" className="mt-[6px] pb-[5px]">
                        <Group title="Barge-in" className="mt-[3px] pb-[7px]">
                            <div className="flex h-[18px] items-center">
                                <label htmlFor="barge" className="w-[65px]">
                                    Barge-in?
                                </label>
                                <span className="relative flex">
                                    <input
                                        id="barge"
                                        type="checkbox"
                                        defaultChecked
                                        className={clsx(SUNKEN, "peer size-[11px] appearance-none bg-white")}
                                    />
                                    <svg
                                        viewBox="0 0 11 11"
                                        className="pointer-events-none absolute inset-0 hidden size-[11px] peer-checked:block"
                                    >
                                        <path d="M2.500 5l2 2.500L8.500 3" fill="none" stroke="#111" strokeWidth="1.500" />
                                    </svg>
                                </span>
                            </div>
                            <div className="flex h-5 items-center">
                                <span className="w-[67px]">Barge-in Type:</span>
                                <div className="flex gap-[6px]">
                                    <Radio group="barge-type" label="Speech" checked />
                                    <Radio group="barge-type" label="Hotword" />
                                </div>
                            </div>
                        </Group>
                        {["Timeout:", "Language:"].map((name) => (
                            <div key={name} className="mt-1 flex items-center">
                                <label htmlFor={name} className="w-[47px]">
                                    {name}
                                </label>
                                <input id={name} className={clsx(SUNKEN, "h-[15px] min-w-0 flex-1 bg-white px-[2px]")} />
                            </div>
                        ))}
                    </Group>
                </Group>
            </div>
        </section>
    );
}

export default function App() {
    return (
        <div className="flex min-h-screen flex-col border border-white border-r-[#55534e] border-b-[#55534e] bg-[#d4d0c8] p-[2px] font-['DejaVu_Sans_Condensed','DejaVu_Sans',sans-serif] text-[9px] leading-3 text-black">
            <TitleBar />
            <MenuBar />
            <Toolbar />
            <main className="flex flex-1 gap-[5px] pt-1 pr-[6px] pb-[3px] pl-1">
                <ProjectPanel />
                <div className="flex w-[350px] flex-none flex-col gap-1">
                    <DesignEditor />
                    <AudioEditor />
                </div>
                <PropertiesPanel />
            </main>
            <footer className="flex h-[17px] flex-none items-center border-t border-[#9b978f] pl-[3px] shadow-[inset_0_1px_0_white]">
                Start_Welcome.prompt saved.
            </footer>
        </div>
    );
}
